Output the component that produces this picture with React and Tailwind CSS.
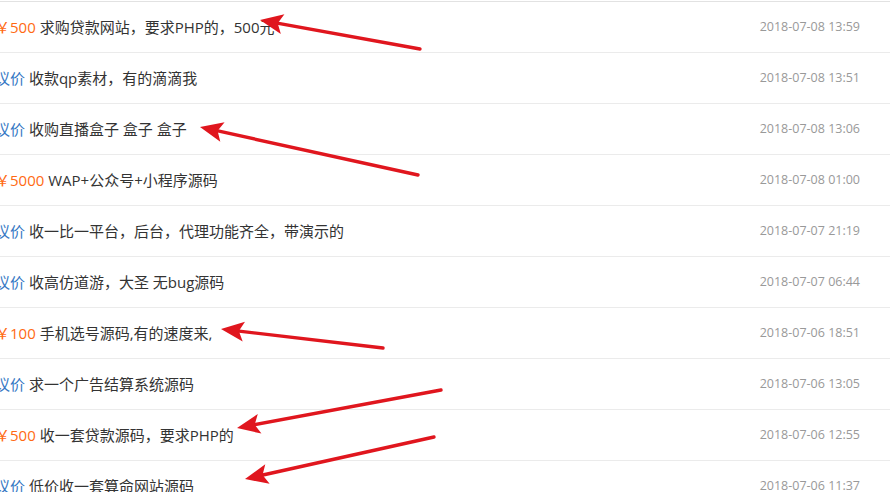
import React from "react";

const rows = [
  { price: "￥500", title: "求购贷款网站，要求PHP的，500元", time: "2018-07-08 13:59" },
  { price: null, title: "收款qp素材，有的滴滴我", time: "2018-07-08 13:51" },
  { price: null, title: "收购直播盒子 盒子 盒子", time: "2018-07-08 13:06" },
  { price: "￥5000", title: "WAP+公众号+小程序源码", time: "2018-07-08 01:00" },
  { price: null, title: "收一比一平台，后台，代理功能齐全，带演示的", time: "2018-07-07 21:19" },
  { price: null, title: "收高仿道游，大圣 无bug源码", time: "2018-07-07 06:44" },
  { price: "￥100", title: "手机选号源码,有的速度来,", time: "2018-07-06 18:51" },
  { price: null, title: "求一个广告结算系统源码", time: "2018-07-06 13:05" },
  { price: "￥500", title: "收一套贷款源码，要求PHP的", time: "2018-07-06 12:55" },
  { price: null, title: "低价收一套算命网站源码", time: "2018-07-06 11:37" },
];

// annotation arrows drawn over the list: [tailX, tailY, tipX, tipY]
const arrows = [
  [420, 49, 260, 20],
  [418, 175, 200, 127],
  [383, 348, 221, 329],
  [441, 390, 237, 428],
  [434, 437, 245, 479],
];

const Arrow = ({ a }) => {
  const [x1, y1, x2, y2] = a;
  const dx = x2 - x1;
  const dy = y2 - y1;
  const len = Math.hypot(dx, dy);
  const ux = dx / len;
  const uy = dy / len;
  const head = 23;
  const half = 10;
  const bx = x2 - ux * head;
  const by = y2 - uy * head;
  const pts = `${x2},${y2} ${bx - uy * half},${by + ux * half} ${bx + ux * 5},${by + uy * 5} ${bx + uy * half},${by - ux * half}`;
  return (
    <g>
      <line x1={x1} y1={y1} x2={bx + ux * 7} y2={by + uy * 7} stroke="#e0161e" strokeWidth="3.4" strokeLinecap="round" />
      <polygon points={pts} fill="#e0161e" />
    </g>
  );
};

export default function App() {
  return (
    <div
      className="relative w-[890px] h-[492px] overflow-hidden bg-white"
      style={{ fontFamily: '"Open Sans", "Noto Sans CJK SC", sans-serif' }}
    >
      <div className="pt-px">
        <ul className="border-t border-[#e2e2e2]">
          {rows.map((r, i) => (
            <li
              key={i}
              className="flex items-center justify-between h-[51px] border-b border-[#ebebeb] pr-[30px]"
            >
              <div className="-ml-[5px] text-[15px] text-[#333] whitespace-nowrap">
                {r.price ? (
                  <span className="text-[#ff6a13]">{r.price}</span>
                ) : (
                  <span className="text-[#3578c4]">议价</span>
                )}{" "}
                {r.title}
              </div>
              <span className="text-[12.5px] text-[#999]">{r.time}</span>
            </li>
          ))}
        </ul>
      </div>
      <svg className="absolute inset-0 pointer-events-none" width="890" height="492">
        {arrows.map((a, i) => (
          <Arrow key={i} a={a} />
        ))}
      </svg>
    </div>
  );
}
